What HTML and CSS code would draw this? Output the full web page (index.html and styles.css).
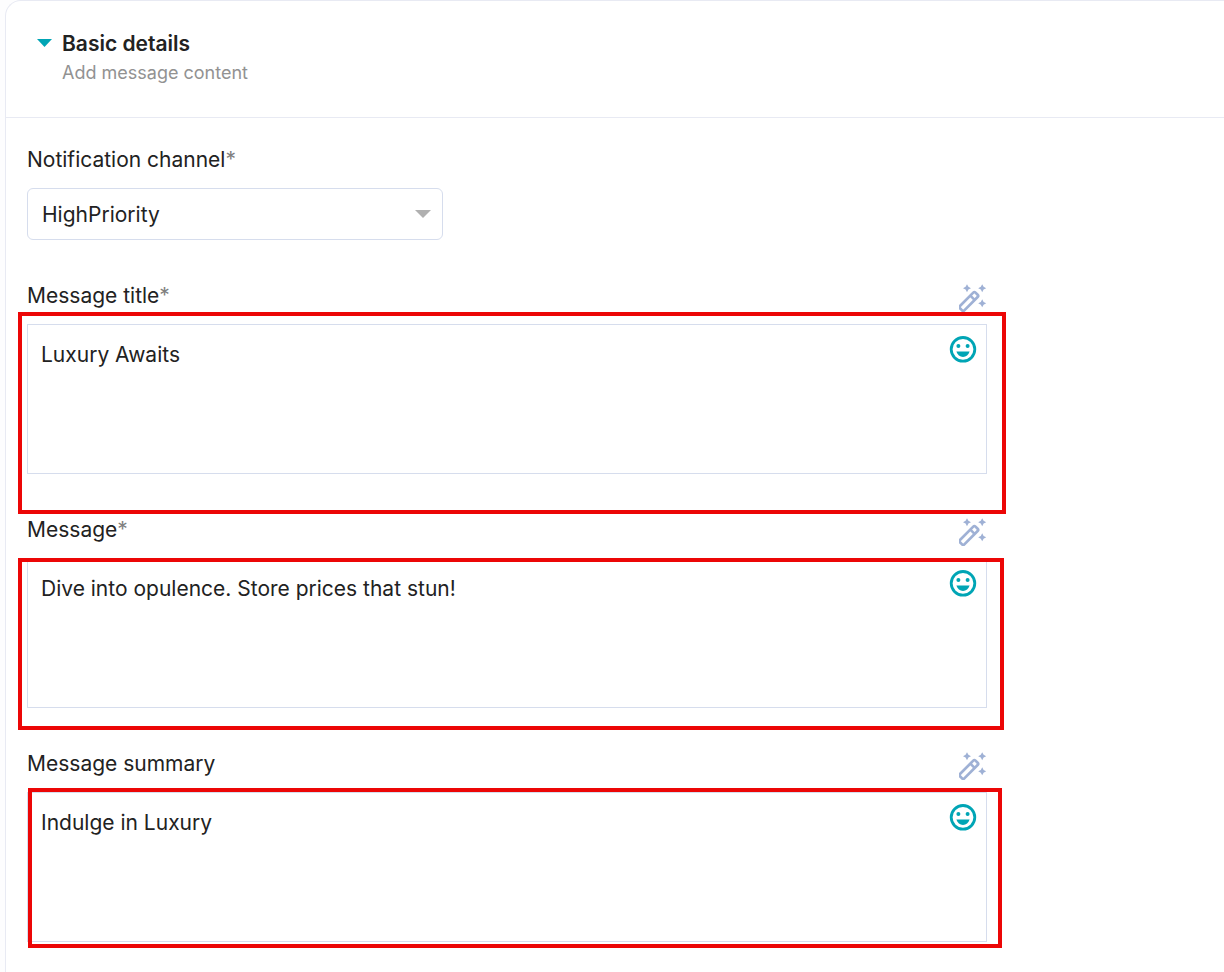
FILE: index.html
```html
<!DOCTYPE html>
<html lang="en">
<head>
    <meta charset="UTF-8">
    <meta name="viewport" content="width=device-width, initial-scale=1.0">
    <title>Basic details</title>
    <link rel="stylesheet" href="styles.css">
</head>
<body>

<!-- Shared icons -->
<svg class="sprite" aria-hidden="true">
    <symbol id="wand" viewBox="0 0 28 28">
        <g transform="rotate(-45 9.800 17.5)">
            <rect x="-1.2" y="14.4" width="22" height="6.2" rx="1.6" fill="none" stroke="currentColor" stroke-width="2.7"/>
            <path d="M15 14.5v6" fill="none" stroke="currentColor" stroke-width="2.6"/>
        </g>
        <path fill="currentColor" d="M8 0.200l1.400 2.600 2.600 1.400-2.600 1.400-1.400 2.600-1.400-2.600-2.600-1.400 2.600-1.400zM23.200 0.200l1.400 2.600 2.600 1.400-2.600 1.400-1.400 2.600-1.400-2.600-2.600-1.400 2.600-1.400zM23.200 15.300l1.400 2.600 2.600 1.400-2.600 1.400-1.400 2.600-1.400-2.600-2.600-1.400 2.600-1.400z"/>
    </symbol>
    <symbol id="smile" viewBox="0 0 28 28">
        <circle cx="14" cy="14.3" r="11.8" fill="none" stroke="currentColor" stroke-width="2.8"/>
        <circle cx="9.4" cy="11" r="2" fill="currentColor"/>
        <circle cx="18.6" cy="11" r="2" fill="currentColor"/>
        <path d="M7.4 16.500h13.200c-1 3.400-3.500 5.400-6.600 5.400s-5.600-2-6.600-5.400z" fill="currentColor"/>
    </symbol>
</svg>

<details class="card" open>
    <summary class="card-header">
        <span class="caret"></span>
        <span class="heading">
            <span class="title">Basic details</span>
            <span class="subtitle">Add message content</span>
        </span>
    </summary>

    <form class="card-body">
        <div class="field">
            <div class="label-row">
                <label for="channel">Notification channel<span class="required">*</span></label>
            </div>
            <div class="select-wrap">
                <select id="channel">
                    <option>HighPriority</option>
                </select>
            </div>
        </div>

        <div class="field">
            <div class="label-row">
                <label for="title">Message title<span class="required">*</span></label>
                <button type="button" class="icon-btn wand-btn" aria-label="Generate title"><svg><use href="#wand"/></svg></button>
            </div>
            <div class="text-wrap">
                <textarea id="title">Luxury Awaits</textarea>
                <button type="button" class="icon-btn emoji-btn" aria-label="Insert emoji"><svg><use href="#smile"/></svg></button>
                <div class="highlight highlight-title"></div>
            </div>
        </div>

        <div class="field">
            <div class="label-row">
                <label for="message">Message<span class="required">*</span></label>
                <button type="button" class="icon-btn wand-btn" aria-label="Generate message"><svg><use href="#wand"/></svg></button>
            </div>
            <div class="text-wrap">
                <textarea id="message">Dive into opulence. Store prices that stun!</textarea>
                <button type="button" class="icon-btn emoji-btn" aria-label="Insert emoji"><svg><use href="#smile"/></svg></button>
                <div class="highlight highlight-message"></div>
            </div>
        </div>

        <div class="field">
            <div class="label-row">
                <label for="summary">Message summary</label>
                <button type="button" class="icon-btn wand-btn" aria-label="Generate summary"><svg><use href="#wand"/></svg></button>
            </div>
            <div class="text-wrap">
                <textarea id="summary">Indulge in Luxury</textarea>
                <button type="button" class="icon-btn emoji-btn" aria-label="Insert emoji"><svg><use href="#smile"/></svg></button>
                <div class="highlight highlight-summary"></div>
            </div>
        </div>
    </form>
</details>

</body>
</html>
```
FILE: styles.css
```css
* {
    box-sizing: border-box;
}

body {
    margin: 0;
    padding-left: 5px;
    background: #fdfdfe;
    color: #222222;
    font-family: Inter, 'Liberation Sans', sans-serif;
    font-size: 21px;
}

.sprite {
    display: none;
}

.card {
    background: white;
    border: 1px solid #e8eaf3;
    border-right: none;
    border-bottom: none;
    border-radius: 16px 0 0 0;
}

.card-header {
    display: flex;
    gap: 10px;
    height: 117px;
    padding: 28px 31px;
    border-bottom: 1px solid #e8eaf3;
    cursor: pointer;
    list-style: none;
}

.caret {
    margin-top: 10px;
    width: 15px;
    height: 8px;
    background: #00a5b5;
    clip-path: polygon(0 0, 100% 0, 50% 100%);
}

.heading {
    display: flex;
    flex-direction: column;
}

.title {
    font-weight: 600;
    line-height: 30px;
}

.subtitle {
    color: #929292;
    font-size: 18px;
    line-height: 28px;
}

.card-body {
    display: flex;
    flex-direction: column;
    gap: 40px;
    max-width: 981px;
    padding: 26px 0 30px 21px;
}

.field {
    display: flex;
    flex-direction: column;
    gap: 12px;
}

.label-row {
    display: flex;
    justify-content: space-between;
    align-items: flex-end;
    line-height: 32px;
}

.required {
    color: #808080;
}

.select-wrap {
    position: relative;
    max-width: 416px;
}

.select-wrap::after {
    content: '';
    position: absolute;
    top: 22px;
    right: 12px;
    width: 16px;
    height: 8px;
    background: #b0b0b0;
    clip-path: polygon(0 0, 100% 0, 50% 100%);
    pointer-events: none;
}

select {
    appearance: none;
    display: block;
    width: 100%;
    height: 52px;
    padding: 0 14px;
    border: 1px solid #d6dded;
    border-radius: 6px;
    background: white;
    color: inherit;
    font: inherit;
}

.text-wrap {
    position: relative;
}

textarea {
    display: block;
    width: 100%;
    height: 150px;
    padding: 14px 50px 14px 13px;
    border: 1px solid #d6dded;
    border-radius: 0;
    background: white;
    color: inherit;
    font: inherit;
    line-height: 32px;
    resize: none;
    outline: none;
}

.icon-btn {
    width: 28px;
    height: 28px;
    padding: 0;
    border: none;
    background: none;
    cursor: pointer;
}

.icon-btn svg {
    display: block;
    width: 100%;
    height: 100%;
}

.wand-btn {
    color: #9fb1d5;
}

.emoji-btn {
    position: absolute;
    top: 11px;
    right: 10px;
    color: #00a5b5;
}

/* Callout frames around the text boxes */
.highlight {
    position: absolute;
    border: 4px solid #ec0606;
    pointer-events: none;
}

.highlight-title {
    top: -12px;
    right: -19px;
    bottom: -40px;
    left: -9px;
}

.highlight-message {
    top: 0;
    right: -17px;
    bottom: -22px;
    left: -9px;
}

.highlight-summary {
    top: -4px;
    right: -15px;
    bottom: -6px;
    left: 1px;
}
```
